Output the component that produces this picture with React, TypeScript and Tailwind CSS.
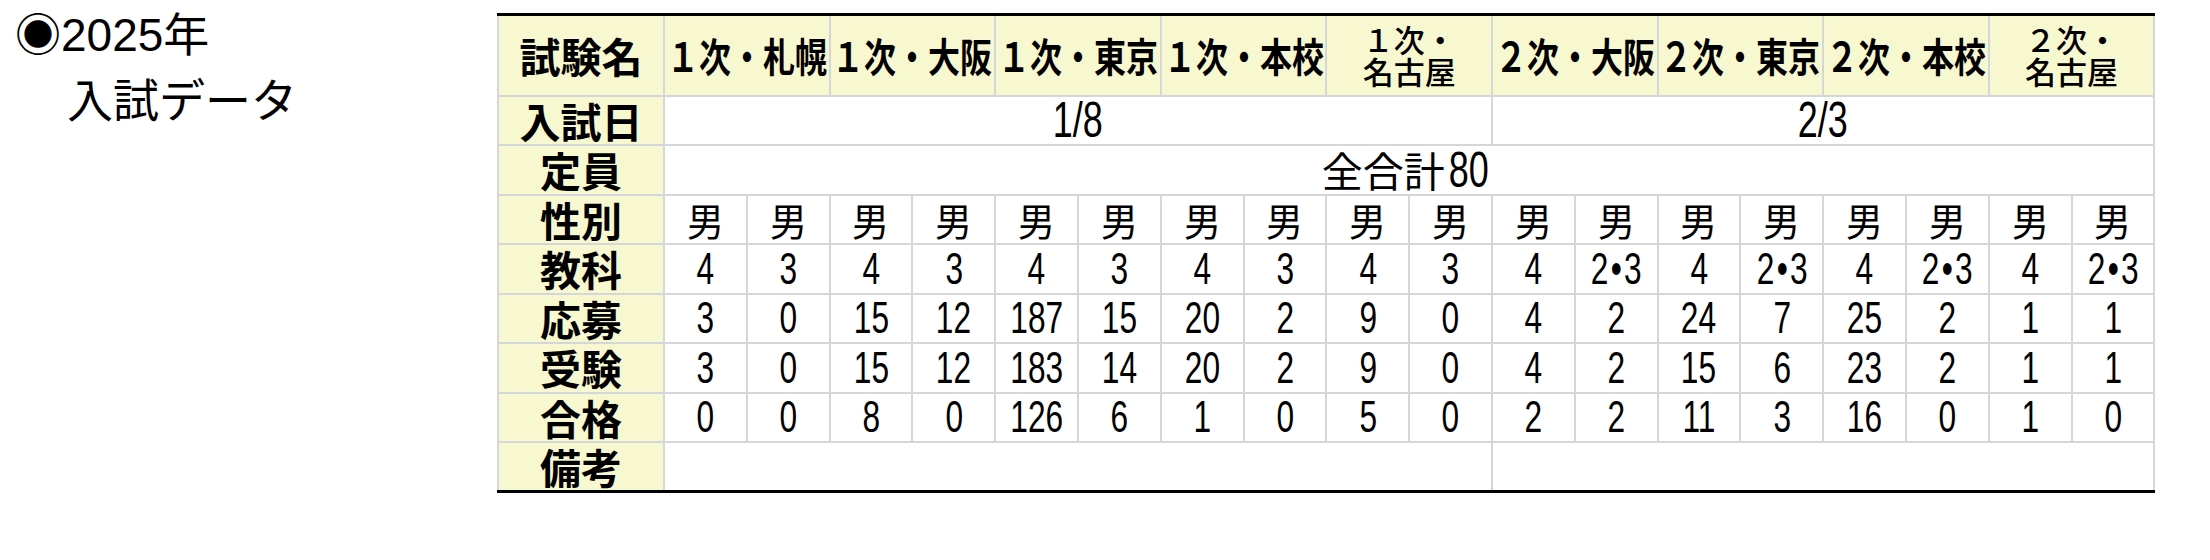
const jp = "font-['Noto_Sans_CJK_JP',sans-serif]"
const latin = "font-['Liberation_Sans','Noto_Sans_CJK_JP',sans-serif]"

type Head = { top?: string; main: string }

const heads: Head[] = [
    { main: '１次・札幌' },
    { main: '１次・大阪' },
    { main: '１次・東京' },
    { main: '１次・本校' },
    { top: '１次・', main: '名古屋' },
    { main: '２次・大阪' },
    { main: '２次・東京' },
    { main: '２次・本校' },
    { top: '２次・', main: '名古屋' },
]

const subjects = ['4', '3', '4', '3', '4', '3', '4', '3', '4', '3', '4', '2•3', '4', '2•3', '4', '2•3', '4', '2•3']
const applied = [3, 0, 15, 12, 187, 15, 20, 2, 9, 0, 4, 2, 24, 7, 25, 2, 1, 1]
const taken = [3, 0, 15, 12, 183, 14, 20, 2, 9, 0, 4, 2, 15, 6, 23, 2, 1, 1]
const passed = [0, 0, 8, 0, 126, 6, 1, 0, 5, 0, 2, 2, 11, 3, 16, 0, 1, 0]

const cell = 'border-2 border-[#d3d6db] p-0 text-center align-middle'
const box = 'flex h-[40px] items-center justify-center'

function Label({ children }: { children: string }) {
    return (
        <td className={`${cell} bg-[#f7f7d0]`}>
            <div className={`${box} ${jp} text-[41px] font-bold leading-none`}>{children}</div>
        </td>
    )
}

// condensed digits: Liberation Sans squeezed horizontally
function Narrow({ children, className = 'text-[44px]' }: { children: React.ReactNode; className?: string }) {
    return (
        <span className={`inline-block scale-x-[0.72] whitespace-nowrap leading-none ${latin} ${className}`}>
            {children}
        </span>
    )
}

function Value({ v }: { v: string | number }) {
    const s = String(v)
    if (s.includes('•')) {
        const [a, b] = s.split('•')
        return (
            <Narrow>
                {a}
                <span className="mx-[3px]">•</span>
                {b}
            </Narrow>
        )
    }
    return <Narrow>{s}</Narrow>
}

function NumRow({ name, values }: { name: string; values: (string | number)[] }) {
    return (
        <tr className="h-[49.5px]">
            <Label>{name}</Label>
            {values.map((v, i) => (
                <td key={i} className={cell}>
                    <div className={box}>
                        <Value v={v} />
                    </div>
                </td>
            ))}
        </tr>
    )
}

export default function App() {
    return (
        <div className="flex items-start bg-white pl-[15px] text-black w-[2210px] h-[560px]">
            <div className={`w-[482px] shrink-0 ${jp} text-[46px] leading-[62px]`}>
                <div>
                    <span>◉</span>
                    <span className="font-['Liberation_Sans',sans-serif]">2025</span>年
                </div>
                <div className="pl-[52px]">入試データ</div>
            </div>

            <table className="mt-[13px] table-fixed border-collapse border-t-[3px] border-b-[3px] border-t-black border-b-black w-[1656px] border-x-0">
                <colgroup>
                    <col className="w-[166px]" />
                    {Array.from({ length: 18 }).map((_, i) => (
                        <col key={i} className="w-[82.8px]" />
                    ))}
                </colgroup>
                <tbody>
                    <tr className="h-[81px]">
                        <Label>試験名</Label>
                        {heads.map((h, i) => (
                            <td key={i} colSpan={2} className={`${cell} bg-[#f7f7d0] ${jp}`}>
                                {h.top ? (
                                    <div className="text-[31px] font-medium leading-[32px]">
                                        <div>{h.top}</div>
                                        <div>{h.main}</div>
                                    </div>
                                ) : (
                                    <div className={box}>
                                        <span className="inline-block scale-x-[0.8] whitespace-nowrap text-[40px] font-bold leading-none">
                                            {h.main}
                                        </span>
                                    </div>
                                )}
                            </td>
                        ))}
                    </tr>
                    <tr className="h-[49.5px]">
                        <Label>入試日</Label>
                        <td colSpan={10} className={cell}>
                            <div className={box}>
                                <Narrow className="text-[50px]">1/8</Narrow>
                            </div>
                        </td>
                        <td colSpan={8} className={cell}>
                            <div className={box}>
                                <Narrow className="text-[50px]">2/3</Narrow>
                            </div>
                        </td>
                    </tr>
                    <tr className="h-[49.5px]">
                        <Label>定員</Label>
                        <td colSpan={18} className={cell}>
                            <div className={`${box} ${jp} text-[41px] leading-none`}>
                                <span>全合計</span>
                                <Narrow className="text-[50px] ml-[-4px]">80</Narrow>
                            </div>
                        </td>
                    </tr>
                    <tr className="h-[49.5px]">
                        <Label>性別</Label>
                        {subjects.map((_, i) => (
                            <td key={i} className={cell}>
                                <div className={`${box} ${jp} text-[39px] leading-none`}>
                                    <span className="inline-block scale-x-[0.95]">男</span>
                                </div>
                            </td>
                        ))}
                    </tr>
                    <NumRow name="教科" values={subjects} />
                    <NumRow name="応募" values={applied} />
                    <NumRow name="受験" values={taken} />
                    <NumRow name="合格" values={passed} />
                    <tr className="h-[49.5px]">
                        <Label>備考</Label>
                        <td colSpan={10} className={cell}></td>
                        <td colSpan={8} className={cell}></td>
                    </tr>
                </tbody>
            </table>
        </div>
    )
}
